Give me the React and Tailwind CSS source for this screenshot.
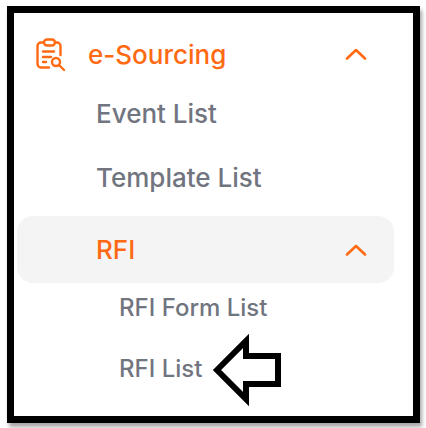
import React from "react";

const Chevron = () => (
  <svg width="24" height="14" viewBox="0 0 24 14" fill="none" stroke="#ff6a13" strokeWidth="2.6" strokeLinecap="round" strokeLinejoin="round">
    <path d="M3 11.5 L12 3 L21 11.5" />
  </svg>
);

const ClipIcon = () => (
  <svg width="32" height="34" viewBox="0 0 32 34" fill="none" stroke="#ff6a13" strokeWidth="2.4" strokeLinecap="round" strokeLinejoin="round">
    <path d="M9 4.5 H6 a3.5 3.5 0 0 0 -3.5 3.5 V26 a3.5 3.5 0 0 0 3.5 3.5 H14" />
    <path d="M20 4.5 H22 a3.5 3.5 0 0 1 3.5 3.5 V17" />
    <rect x="9" y="1.5" width="11" height="6" rx="3" />
    <path d="M8 13.5 H19 M8 19 H16 M8 24 H11" />
    <circle cx="21" cy="24" r="4" />
    <path d="M24.5 27.5 L29 32" />
  </svg>
);

export default function App() {
  return (
    <div className="w-[426px] h-[428px] bg-white pl-[7px] pt-[6px] overflow-hidden" style={{ fontFamily: "Inter, 'Liberation Sans', sans-serif" }}>
      <div className="relative w-[413px] h-[417px] border-[7px] border-black bg-white shadow-[2px_4px_4px_rgba(0,0,0,0.35)] px-[3px] pt-[25px]">
        <div className="flex items-center h-[34px] text-[#ff6a13] text-[26px] leading-[34px] font-medium">
          <div className="ml-[18px] w-[53px]"><ClipIcon /></div>
          <span className="flex-1">e-Sourcing</span>
          <div className="mr-[42px] -translate-y-[1px]"><Chevron /></div>
        </div>
        <div className="mt-[25px] ml-[79px] h-[32px] flex items-center text-[#71757f] text-[26px] font-medium">Event List</div>
        <div className="mt-[32px] ml-[79px] h-[32px] flex items-center text-[#71757f] text-[26px] font-medium">Template List</div>
        <div className="mt-[23px] w-[377px] h-[67px] rounded-[16px] bg-[#f4f4f5] flex items-center justify-between">
          <span className="ml-[79px] text-[#ff6a13] text-[26px] font-medium">RFI</span>
          <div className="mr-[26px]"><Chevron /></div>
        </div>
        <div className="mt-[9px] ml-[102px] h-[32px] flex items-center text-[#71757f] text-[24px] font-medium">RFI Form List</div>
        <div className="mt-[29px] ml-[102px] h-[32px] flex items-center text-[#71757f] text-[24px] font-medium">RFI List</div>
        <svg className="absolute left-[194px] top-[319px]" width="78" height="78" viewBox="0 0 78 78" fill="none" stroke="#000" strokeWidth="6" strokeLinejoin="miter">
          <path d="M9 38 L38 9 V24 H70 V52 H38 V67 Z" />
        </svg>
      </div>
    </div>
  );
}
